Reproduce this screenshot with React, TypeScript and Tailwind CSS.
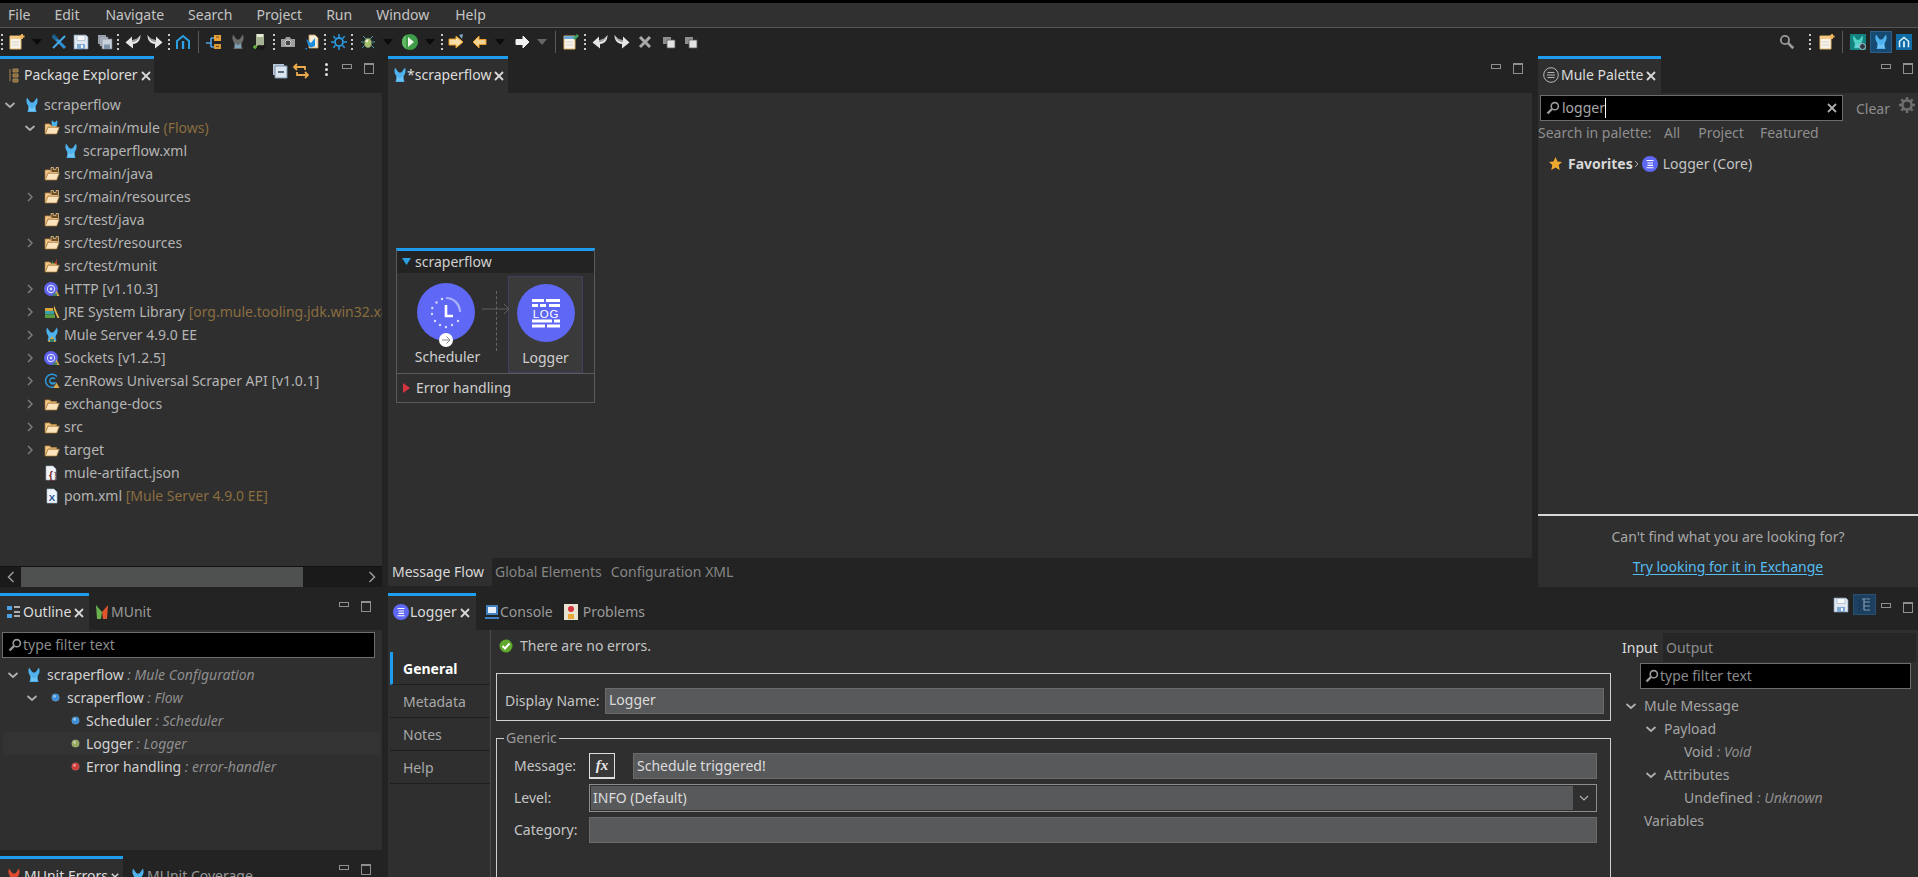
import React from "react";

type P = { className?: string };

const S = ({ w = 16, h = 16, vb, className, children }: { w?: number; h?: number; vb?: string; className?: string; children: React.ReactNode }) => (
  <svg width={w} height={h} viewBox={vb ?? `0 0 ${w} ${h}`} className={"shrink-0 " + (className ?? "")}>{children}</svg>
);

const Mule = ({ className, color = "#4db2ee", w = 16, h = 16 }: P & { color?: string; w?: number; h?: number }) => (
  <S w={w} h={h} vb="0 0 16 16" className={className}>
    <path d="M3 .5 L6.200 5 Q8 6 9.800 5 L13 .5 Q14.500 5 12 8.500 Q11 10 12.500 15 H3.500 Q5 10 4 8.500 Q1.500 5 3 .5Z" fill={color} />
    <path d="M5.200 9 L8 11.500 L10.800 9 L11 14 H5Z" fill="#8ad2f8" opacity=".55" />
  </S>
);

const Folder = ({ className, badge }: P & { badge?: "mule" | "munit" | "pkg" }) => (
  <S className={className}>
    <path d="M1.500 3.500 H6 L7.500 5 H12.500 V8 H1.500Z" fill="#7d5a2c" />
    <path d="M1 4 H5.500 L7 5.500 H12.500 V7 H4 L1.500 14 H1Z" fill="#f2c68c" stroke="#a87a3a" strokeWidth=".6" />
    <path d="M4 7.200 H15.300 L12.700 14 H1.300Z" fill="#fbe3bd" stroke="#b07d3b" strokeWidth=".7" />
    {badge === "pkg" && <path d="M7 1.500 h2.500 v2 h2.500 v-2 h2.500 v5 h-7.500Z" fill="#6f4e22" stroke="#f4d29f" strokeWidth=".7" />}
    {badge === "mule" && <path d="M8 .3 L10.500 2.600 L13 .3 C13.800 2.500 13.500 4.500 12.500 6 H8.500 C7.500 4.500 7.200 2.500 8 .3Z" fill="#45b1ee" />}
    {badge === "munit" && <>
      <path d="M8 2 L10 6 H8.500Z" fill="#4aa83e" />
      <path d="M13 .5 L10.500 6 H12.500Z" fill="#d9442a" />
    </>}
  </S>
);

const Lib = ({ className }: P) => (
  <S className={className}>
    <circle cx="7" cy="8" r="7" fill="#5f63ee" />
    <circle cx="7" cy="8" r="3.600" fill="none" stroke="#d8dcff" strokeWidth="1.100" />
    <circle cx="7" cy="8" r="1.400" fill="#d8dcff" />
    <path d="M10 15 L12.500 9.500 L15.500 15Z" fill="#d7a94a" />
    <path d="M9 12.500 H13 V15 H9Z" fill="#3f7f66" />
  </S>
);

const Jre = ({ className }: P) => (
  <S className={className}>
    <path d="M1 4 H9 V7 H1Z" fill="#d8a53c" />
    <path d="M1 7 H10 V10.500 H1Z" fill="#3aa0a8" />
    <path d="M1 10.500 H11 V14 H1Z" fill="#5a9c3f" />
    <path d="M10 1.500 L15.500 14 H13.500 L9.800 5.500Z" fill="#e4b64f" />
  </S>
);

const MuleLib = ({ className }: P) => (
  <S className={className}>
    <path d="M3 .5 L6.200 5 Q8 6 9.800 5 L13 .5 Q14.500 5 12 8.500 Q11 10 12.500 14 H3.500 Q5 10 4 8.500 Q1.500 5 3 .5Z" fill="#4db2ee" />
    <path d="M4 15 L8 9 L12 15Z" fill="#d7a94a" />
    <path d="M6 12 H10 V15 H6Z" fill="#3f7f66" />
  </S>
);

const Zen = ({ className }: P) => (
  <S className={className}>
    <path d="M13 3.500 A6.500 6.500 0 1 0 13 12" fill="none" stroke="#2e9bd8" strokeWidth="1.500" />
    <path d="M11 6 A3 3 0 1 0 11 10 H6.500" fill="none" stroke="#2e9bd8" strokeWidth="1.300" />
    <path d="M9.500 15 L12.500 9.500 L15.500 15Z" fill="#d7a94a" />
  </S>
);

const JsonFile = ({ className }: P) => (
  <S className={className}>
    <path d="M2 1 H9 L12 4 V15 H2Z" fill="#f0f3f7" stroke="#9cb0c4" strokeWidth=".6" />
    <text x="5" y="14" fontSize="10" fontFamily="Liberation Sans" fontWeight="700" fill="#7b1f1f">{"{"}</text>
    <text x="10" y="14" fontSize="9" fontFamily="Liberation Sans" fill="#5a2828">{"}"}</text>
  </S>
);

const PomFile = ({ className }: P) => (
  <S className={className}>
    <path d="M3 1 H10 L13 4 V15 H3Z" fill="#eef4fa" stroke="#a8bfd3" strokeWidth=".6" />
    <text x="4.800" y="12.500" fontSize="9.500" fontFamily="Liberation Sans" fontWeight="700" fill="#1d4f8f">X</text>
  </S>
);

const Chev = ({ open, className }: P & { open?: boolean }) => (
  <S w={16} h={16} className={className}>
    {open ? <path d="M3.500 6 L8 10 L12.500 6" fill="none" stroke="#b0b0b0" strokeWidth="1.700" /> : <path d="M6 4 L10 8 L6 12" fill="none" stroke="#7b7b7b" strokeWidth="1.500" />}
  </S>
);

const Close = ({ className, s = 10 }: P & { s?: number }) => (
  <S w={s} h={s} vb="0 0 10 10" className={className}>
    <path d="M1 1 L9 9 M9 1 L1 9" stroke="#d8d8d8" strokeWidth="1.800" />
  </S>
);

const MinMax = ({ className }: P) => (
  <div className={"flex items-center gap-[12px] " + (className ?? "")}>
    <div className="w-[10px] h-[5px] border border-[#8f8f8f] -mt-[5px]" />
    <div className="w-[10px] h-[11px] border border-[#8f8f8f] border-t-2" />
  </div>
);

const Dots = ({ className }: P) => (
  <div className={"w-[3px] h-[16px] flex flex-col justify-between shrink-0 " + (className ?? "")}>
    <span className="w-[2px] h-[2px] bg-[#c8c8c8]" /><span className="w-[2px] h-[2px] bg-[#c8c8c8]" /><span className="w-[2px] h-[2px] bg-[#c8c8c8]" /><span className="w-[2px] h-[2px] bg-[#c8c8c8]" />
  </div>
);

const Sep = ({ className }: P) => <div className={"w-px h-[22px] bg-[#5a5a5a] shrink-0 " + (className ?? "")} />;
const Drop = ({ className, gray }: P & { gray?: boolean }) => (
  <S w={10} h={6} className={className}><path d="M0 0 H10 L5 6Z" fill={gray ? "#666" : "#0b0b0b"} /></S>
);

const NewFile = ({ className, pin }: P & { pin?: boolean }) => (
  <S w={18} h={18} className={className}>
    <path d="M2 3 H13 V16 H2Z" fill="#f8f3e6" stroke="#e0b66f" strokeWidth="1" />
    <path d="M2 3 H13 V6 H2Z" fill={pin ? "#6fa6d8" : "#f3c884"} />
    <path d="M4 9 H11 M4 12 H11" stroke="#d4d4d4" strokeWidth="1" />
    {pin ? <path d="M11 5 L15 1 L17 3 L13 7Z" fill="#3fa05a" /> : <path d="M14 1 V6 M11.500 3.500 H16.500" stroke="#f5b85c" strokeWidth="1.800" />}
  </S>
);

const CrossBlue = ({ className }: P) => (
  <S className={className}>
    <path d="M2 2 L14 14" stroke="#2d8fd0" strokeWidth="3" />
    <path d="M14 2 L2 14" stroke="#49a8e6" strokeWidth="2" />
    <path d="M2 1 L6 5" stroke="#1c5c8a" strokeWidth="3" />
  </S>
);

const Save = ({ className }: P) => (
  <S className={className}>
    <path d="M1 1 H13 L15 3 V15 H1Z" fill="#dfe8f3" stroke="#7d93ac" strokeWidth=".7" />
    <path d="M4 1.500 H12 V6.500 H4Z" fill="#f4f6f9" stroke="#9aa9ba" strokeWidth=".6" />
    <path d="M4 10 H12 V15 H4Z" fill="#7fa8cf" />
    <path d="M8 11 H10 V14 H8Z" fill="#eef3f8" />
  </S>
);

const SaveAll = ({ className }: P) => (
  <S className={className}>
    <path d="M1 1 H9 V10 H1Z" fill="#9aa3ad" />
    <path d="M3 3 H11 V12 H3Z" fill="#b6bec7" stroke="#717b86" strokeWidth=".5" />
    <path d="M5 5 H15 V15 H5Z" fill="#c9d1da" stroke="#717b86" strokeWidth=".6" />
    <path d="M7 10.500 H13 V15 H7Z" fill="#7e93a8" />
  </S>
);

const Undo = ({ className, flip }: P & { flip?: boolean }) => (
  <S className={className}>
    <g transform={flip ? "translate(16,0) scale(-1,1)" : undefined}>
      <path d="M15.500 1 C15.500 7 12.500 9.500 8 10 V14.500 L.5 8.500 L7 2.500 V6 C10.500 6 13.500 4 15.500 1Z" fill="#e6e6e6" />
      <path d="M15.500 1 C13.500 4 10.500 6 7 6 V8 C11 8 14 5.500 15.500 1Z" fill="#9c9c9c" />
    </g>
  </S>
);

const Arch = ({ className, color = "#2d9fe3" }: P & { color?: string }) => (
  <S className={className}>
    <path d="M2 15 V7 L8 2 L14 7 V15" fill="none" stroke={color} strokeWidth="2" />
    <path d="M8 7 V15" stroke={color} strokeWidth="2.400" />
  </S>
);

const TreeTb = ({ className }: P) => (
  <S className={className}>
    <path d="M0 9 H6 M5 4 V13 M5 4 H8 M5 13 H8" stroke="#4da3e6" strokeWidth="1.600" fill="none" />
    <path d="M8 1 H15 V7 H8Z" fill="#e8a238" />
    <path d="M8 10 H15 V15 H8Z" fill="#d89a3a" />
    <path d="M10 3 H13 M10 12.500 H13" stroke="#7a4a10" strokeWidth="1" />
  </S>
);

const Jar = ({ className }: P) => (
  <S w={14} h={18} className={className}>
    <path d="M3 1 H11 V13 H3Z" fill="#a7b193" />
    <path d="M4 1 H10 V4 H4Z" fill="#e5e9d4" />
    <path d="M0 14 H4 M2 12 V16" stroke="#65b33e" strokeWidth="1.500" />
    <text x="4" y="17" fontSize="9" fontFamily="Liberation Sans" fontStyle="italic" fontWeight="700" fill="#111">m</text>
  </S>
);

const Camera = ({ className }: P) => (
  <S className={className}>
    <path d="M1 5 H5 L6 3 H10 L11 5 H15 V13 H1Z" fill="#9d9d9d" />
    <circle cx="8" cy="9" r="3" fill="#444" stroke="#d4d4d4" strokeWidth="1" />
  </S>
);

const BlueFile = ({ className }: P) => (
  <S className={className}>
    <path d="M5 1 H11 L14 4 V14 H5Z" fill="#f6ecd8" stroke="#c8a165" strokeWidth=".8" />
    <path d="M2 5 L7 9 L11 4 V12 L7 13.500 L4.500 12Z" fill="#1a8ddb" />
    <path d="M1 14 H3 V16Z" fill="#1a8ddb" />
  </S>
);

const Sun = ({ className }: P) => (
  <S className={className}>
    <circle cx="8" cy="8" r="4" fill="none" stroke="#2c9ae0" strokeWidth="1.800" />
    <path d="M8 0 V3 M8 13 V16 M0 8 H3 M13 8 H16 M2.300 2.300 L4.400 4.400 M11.600 11.600 L13.700 13.700 M13.700 2.300 L11.600 4.400 M4.400 11.600 L2.300 13.700" stroke="#2c9ae0" strokeWidth="1.500" />
  </S>
);

const Bug = ({ className }: P) => (
  <S className={className}>
    <path d="M3 2 L6 5 M13 2 L10 5 M1 8 H4 M12 8 H15 M2 14 L5 11 M14 14 L11 11" stroke="#4aa0a0" strokeWidth="1" />
    <ellipse cx="8" cy="9" rx="3.800" ry="5" fill="#a6bf6a" stroke="#456" strokeWidth=".6" />
    <circle cx="7" cy="7" r="1.400" fill="#e8f0d0" />
  </S>
);

const Run = ({ className }: P) => (
  <S w={18} h={18} className={className}>
    <circle cx="9" cy="9" r="8" fill="#3e9b47" />
    <path d="M7 4 L13 9 L7 14Z" fill="#f2f7ec" />
    <path d="M1 9 A8 8 0 0 1 5 2 V16 A8 8 0 0 1 1 9Z" fill="#5fb964" />
  </S>
);

const ArrowFolder = ({ className }: P) => (
  <S className={className}>
    <path d="M1 5 H8 V2 L15 8 L8 14 V11 H1Z" fill="#f7dfa8" stroke="#e59a22" strokeWidth="1" />
    <path d="M11 1 L15 0 L14 5Z" fill="#82a8c8" />
  </S>
);

const Arrow = ({ className, flip, color = "#f5d390", stroke = "#e89a2a" }: P & { flip?: boolean; color?: string; stroke?: string }) => (
  <S className={className}>
    <g transform={flip ? "translate(16,0) scale(-1,1)" : undefined}>
      <path d="M2 5.500 H9 V2 L15 8 L9 14 V10.500 H2Z" fill={color} stroke={stroke} strokeWidth="1" />
    </g>
  </S>
);

const TabSet = ({ className }: P) => (
  <S w={14} h={14} className={className}>
    <path d="M1 2 H9 V9 H1Z" fill="#8f8f8f" />
    <path d="M5 5 H13 V13 H5Z" fill="#e3e3e3" stroke="#555" strokeWidth=".8" />
  </S>
);

const Glass = ({ className, s = 14 }: P & { s?: number }) => (
  <S w={s} h={s} vb="0 0 14 14" className={className}>
    <circle cx="8.800" cy="5.200" r="3.600" fill="none" stroke="#9a9a9a" strokeWidth="1.600" />
    <path d="M6 8 L1.500 12.500" stroke="#9a9a9a" strokeWidth="2.400" />
  </S>
);

const Dot = ({ color, className }: P & { color: string }) => (
  <S w={9} h={9} className={className}>
    <circle cx="4.500" cy="4.500" r="3.800" fill={color} stroke="#ffffff30" strokeWidth=".8" />
    <circle cx="3.600" cy="3.400" r="1.300" fill="#ffffff80" />
  </S>
);

const LoggerDot = ({ className, s = 16 }: P & { s?: number }) => (
  <S w={s} h={s} vb="0 0 16 16" className={className}>
    <circle cx="8" cy="8" r="8" fill="#5e68f4" />
    <path d="M4.500 4.500 H11.500 M5.500 7 H11 M5.500 9.400 H11 M4.500 11.800 H11.500" stroke="#fff" strokeWidth="1.100" />
  </S>
);

const Gear = ({ className }: P) => (
  <S className={className}>
    <circle cx="8" cy="8" r="4.600" fill="none" stroke="#6e6e6e" strokeWidth="2.600" />
    <path d="M8 0 V3 M8 13 V16 M0 8 H3 M13 8 H16 M2.300 2.300 L4.400 4.400 M11.600 11.600 L13.700 13.700 M13.700 2.300 L11.600 4.400 M4.400 11.600 L2.300 13.700" stroke="#6e6e6e" strokeWidth="2.400" />
  </S>
);

const Row = ({ indent, chev, icon, children, row }: { indent: string; chev?: "o" | "c"; icon: React.ReactNode; children: React.ReactNode; row?: string }) => (
  <div className={"h-[23px] flex items-center whitespace-nowrap " + indent + " " + (row ?? "")}>
    <div className="w-4 h-4 shrink-0">{chev && <Chev open={chev === "o"} />}</div>
    <div className="ml-[6px] w-4 flex justify-center shrink-0">{icon}</div>
    <span className="ml-1">{children}</span>
  </div>
);

const Dec = ({ children }: { children: React.ReactNode }) => <span className="text-[#8a6d3f]">{children}</span>;
const It = ({ children }: { children: React.ReactNode }) => <span className="italic text-[#8e8e8e]">{children}</span>;

const ActiveTab = ({ w, children }: { w: string; children: React.ReactNode }) => (
  <div className={"h-[37px] bg-[#2f2f2f] border-t-[3px] border-[#1e9cf0] flex items-center text-[#dcdcdc] shrink-0 pb-[2px] " + w}>{children}</div>
);

const FilterInput = ({ className, children }: P & { children: React.ReactNode }) => (
  <div className={"bg-black border border-[#6d6d6d] flex items-center " + (className ?? "")}>{children}</div>
);

const SideTab = ({ children, active }: { children: React.ReactNode; active?: boolean }) => (
  <div className={"h-[33px] flex items-center border-b border-[#1f1f1f] pt-[2px] " + (active ? "border-l-[3px] border-l-[#1e9cf0] pl-[10px] font-bold text-white" : "pl-[13px] text-[#a8a8a8]")}>{children}</div>
);

const Field = ({ className, children }: P & { children?: React.ReactNode }) => (
  <div className={"bg-[#58595b] border border-[#6a6a6a] h-[26px] flex items-center text-[#dcdcdc] pl-[2px] " + (className ?? "")}>{children}</div>
);

const Clock = () => (
  <svg width="58" height="58" viewBox="0 0 58 58">
    <circle cx="29" cy="29" r="29" fill="#5e68f4" />
    <path d="M29 15 A14 14 0 0 1 43 29" fill="none" stroke="#aab1fb" strokeWidth="2.200" />
    <path d="M29 22 V33 H36" fill="none" stroke="#fff" strokeWidth="2.600" />
    <path d="M25 16 l0 .1 M19.500 19.500 l0 .1 M15.300 25 l0 .1 M15 31 l0 .1 M18 38 l0 .1 M23 42 l0 .1 M29 44 l0 .1 M35 42 l0 .1 M41 38 l0 .1" stroke="#d7daff" strokeWidth="2.400" strokeLinecap="round" />
  </svg>
);

const LogBadge = () => (
  <svg width="58" height="58" viewBox="0 0 58 58">
    <circle cx="29" cy="29" r="29" fill="#5e68f4" />
    <path d="M15 16.500 H27 M29 16.500 H43 M15 21.500 H21 M23 21.500 H29 M32 21.500 H43 M15 37 H35 M37 37 H43 M15 42 H28 M30 42 H43" stroke="#fff" strokeWidth="3" />
    <text x="29" y="34" textAnchor="middle" fontSize="11.500" fontFamily="Liberation Sans" letterSpacing=".8" fill="#fff">LOG</text>
  </svg>
);

export default function App() {
  return (
    <div className="w-[1918px] h-[877px] overflow-hidden bg-[#232323] font-['Noto_Sans',sans-serif] text-[14px] text-[#b4b4b4] flex flex-col leading-none">
      <div className="h-[3px] bg-black shrink-0" />
      <div className="h-[25px] bg-[#303030] border-b border-[#565656] flex items-center shrink-0 text-[#c4c4c4] pl-[8px]">
        <span>File</span><span className="ml-[24px]">Edit</span><span className="ml-[26px]">Navigate</span><span className="ml-[24px]">Search</span><span className="ml-[24px]">Project</span><span className="ml-[24px]">Run</span><span className="ml-[24px]">Window</span><span className="ml-[26px]">Help</span>
      </div>
      <div className="h-[28px] flex items-center shrink-0 pr-[6px]">
        <Dots className="ml-px" />
        <NewFile className="ml-1" />
        <Drop className="ml-[6px]" />
        <CrossBlue className="ml-[9px]" />
        <Save className="ml-[6px]" />
        <SaveAll className="ml-2" />
        <Dots className="ml-1" />
        <Undo className="ml-[5px]" />
        <Undo flip className="ml-[6px]" />
        <Dots className="ml-[5px]" />
        <Arch className="ml-1" />
        <Sep className="ml-[7px]" />
        <TreeTb className="ml-[7px]" />
        <Mule color="#6c6c6c" className="ml-2" />
        <Jar className="ml-[7px]" />
        <Dots className="ml-[6px]" />
        <Camera className="ml-1" />
        <BlueFile className="ml-2" />
        <Dots className="ml-1" />
        <Sun className="ml-1" />
        <Dots className="ml-1" />
        <Bug className="ml-[6px]" />
        <Drop className="ml-[7px]" />
        <Run className="ml-[8px]" />
        <Drop className="ml-[6px]" />
        <Dots className="ml-[6px]" />
        <ArrowFolder className="ml-1" />
        <Arrow flip className="ml-2" />
        <Drop className="ml-[7px]" />
        <Arrow color="#f0f0f0" stroke="#f0f0f0" className="ml-[9px]" />
        <Drop gray className="ml-[7px]" />
        <Sep className="ml-2" />
        <NewFile pin className="ml-[6px]" />
        <Dots className="ml-1" />
        <Undo className="ml-[5px]" />
        <Undo flip className="ml-[6px]" />
        <S w={14} h={14} className="ml-2"><path d="M2 2 L12 12 M12 2 L2 12" stroke="#a8a8a8" strokeWidth="3" /></S>
        <TabSet className="ml-[10px]" />
        <TabSet className="ml-2" />
        <Glass s={16} className="ml-auto -scale-x-100" />
        <Dots className="ml-[14px]" />
        <NewFile className="ml-[6px]" />
        <Sep className="ml-[6px]" />
        <div className="ml-[7px] w-[16px] h-[16px] bg-[#13827f] flex items-center justify-center relative">
          <Mule w={14} h={14} color="#4fd2c4" />
          <span className="absolute right-0 bottom-0 w-[7px] h-[7px] rounded-full bg-[#2a3a44] border border-[#b4c4cc]" />
        </div>
        <div className="ml-1 w-[22px] h-[22px] bg-[#164a72] border border-[#2f5f86] flex items-center justify-center"><Mule color="#4db2ee" /></div>
        <div className="ml-[4px] w-[16px] h-[16px] bg-[#0f6da8] flex items-center justify-center"><Arch color="#e4f2fb" className="scale-75" /></div>
      </div>

      <div className="flex-1 min-h-0 flex gap-[6px]">
        {/* left column */}
        <div className="w-[382px] shrink-0 flex flex-col gap-[6px]">
          <div className="h-[531px] shrink-0 flex flex-col">
            <div className="h-[37px] flex shrink-0">
              <ActiveTab w="w-[154px] pl-[8px]">
                <S w={12} h={16} className="mr-[4px]"><path d="M2 2 V14 M5 2 H10 V5 H5Z M5 7 H10 V10 H5Z M5 12 H10 V15 H5Z" stroke="#a58856" strokeWidth="1" fill="#8d6d3a" /></S>
                <span className="text-[14px]">Package Explorer</span>
                <Close className="ml-[3px] mt-[2px]" />
              </ActiveTab>
              <div className="flex-1 flex items-start pt-[5px] pl-[118px]">
                <S className="mt-[2px]"><path d="M1 1 H12 V12 H1Z" fill="#b8c7d8" /><path d="M3 3 H15 V15 H3Z" fill="#dbe6f1" stroke="#7d93ac" /><path d="M6 9 H12" stroke="#345" strokeWidth="1.500" /></S>
                <S className="ml-[5px] mt-[2px]"><path d="M4 1 L1 4 L4 7 M1 4 H12 V7" fill="none" stroke="#e9a94c" strokeWidth="1.800" /><path d="M12 9 L15 12 L12 15 M15 12 H4 V9" fill="none" stroke="#e9a94c" strokeWidth="1.800" /></S>
                <div className="ml-[16px] mt-[2px] flex flex-col gap-[2px]"><span className="w-[3px] h-[3px] rounded-full bg-[#e0e0e0]" /><span className="w-[3px] h-[3px] rounded-full bg-[#e0e0e0]" /><span className="w-[3px] h-[3px] rounded-full bg-[#e0e0e0]" /></div>
                <MinMax className="ml-[14px] mt-[2px]" />
              </div>
            </div>
            <div className="flex-1 bg-[#2f2f2f] flex flex-col min-h-0">
              <div className="flex-1 overflow-hidden">
                <Row indent="pl-[2px]" chev="o" icon={<Mule />}>scraperflow</Row>
                <Row indent="pl-[22px]" chev="o" icon={<Folder badge="mule" />}>src/main/mule <Dec>(Flows)</Dec></Row>
                <Row indent="pl-[41px]" icon={<Mule />}>scraperflow.xml</Row>
                <Row indent="pl-[22px]" icon={<Folder badge="pkg" />}>src/main/java</Row>
                <Row indent="pl-[22px]" chev="c" icon={<Folder badge="pkg" />}>src/main/resources</Row>
                <Row indent="pl-[22px]" icon={<Folder badge="pkg" />}>src/test/java</Row>
                <Row indent="pl-[22px]" chev="c" icon={<Folder badge="pkg" />}>src/test/resources</Row>
                <Row indent="pl-[22px]" icon={<Folder badge="munit" />}>src/test/munit</Row>
                <Row indent="pl-[22px]" chev="c" icon={<Lib />}>HTTP [v1.10.3]</Row>
                <Row indent="pl-[22px]" chev="c" icon={<Jre />}>JRE System Library <Dec>[org.mule.tooling.jdk.win32.x86_64]</Dec></Row>
                <Row indent="pl-[22px]" chev="c" icon={<MuleLib />}>Mule Server 4.9.0 EE</Row>
                <Row indent="pl-[22px]" chev="c" icon={<Lib />}>Sockets [v1.2.5]</Row>
                <Row indent="pl-[22px]" chev="c" icon={<Zen />}>ZenRows Universal Scraper API [v1.0.1]</Row>
                <Row indent="pl-[22px]" chev="c" icon={<Folder />}>exchange-docs</Row>
                <Row indent="pl-[22px]" chev="c" icon={<Folder />}>src</Row>
                <Row indent="pl-[22px]" chev="c" icon={<Folder />}>target</Row>
                <Row indent="pl-[22px]" icon={<JsonFile />}>mule-artifact.json</Row>
                <Row indent="pl-[22px]" icon={<PomFile />}>pom.xml <Dec>[Mule Server 4.9.0 EE]</Dec></Row>
              </div>
              <div className="h-[21px] bg-[#1a1a1a] border-t border-[#111] flex items-center shrink-0">
                <div className="w-[21px] flex justify-center"><S w={8} h={12}><path d="M6.500 1 L1.500 6 L6.500 11" fill="none" stroke="#9a9a9a" strokeWidth="1.500" /></S></div>
                <div className="w-[282px] h-full bg-[#4f5050]" />
                <div className="flex-1" />
                <div className="w-[21px] flex justify-center"><S w={8} h={12}><path d="M1.500 1 L6.500 6 L1.500 11" fill="none" stroke="#9a9a9a" strokeWidth="1.500" /></S></div>
              </div>
            </div>
          </div>
          <div className="h-[257px] shrink-0 flex flex-col">
            <div className="h-[37px] flex items-stretch shrink-0">
              <ActiveTab w="w-[89px] pl-[6px]">
                <S w={15} h={16} className="mr-[2px]"><path d="M1 2 H6 V6 H1Z M1 10 H6 V14 H1Z" fill="#4da3e6" /><path d="M8 3 H14 M8 8 H14 M8 12 H14" stroke="#d8d8d8" strokeWidth="1.500" /></S>
                <span>Outline</span>
                <Close className="ml-[3px] mt-[2px]" />
              </ActiveTab>
              <div className="flex items-center pl-[6px] text-[#9a9a9a]">
                <S w={14} h={16}><path d="M1 1 L7 8 L6 15 H2 Z" fill="#6ab04c" /><path d="M13 1 L7 8 L8 15 H12Z" fill="#e0552e" /></S>
                <span className="ml-[2px]">MUnit</span>
              </div>
              <div className="flex-1 flex items-start justify-end pt-[6px] pr-[11px]"><MinMax className="mt-[2px]" /></div>
            </div>
            <div className="flex-1 bg-[#2f2f2f] pt-[2px]">
              <FilterInput className="mx-[2px] w-[373px] h-[26px] pl-[5px] text-[#8a8a8a]"><Glass /><span className="ml-[1px]">type filter text</span></FilterInput>
              <div className="pt-[5px] text-[#d2d2d2]">
                <div className="h-[23px] flex items-center pl-[5px]"><Chev open /><Mule className="ml-[5px]" /><span className="ml-[5px]">scraperflow <It>: Mule Configuration</It></span></div>
                <div className="h-[23px] flex items-center pl-[24px]"><Chev open /><Dot color="#3a8fd8" className="ml-[11px]" /><span className="ml-[7px]">scraperflow <It>: Flow</It></span></div>
                <div className="h-[23px] flex items-center pl-[71px]"><Dot color="#3a8fd8" /><span className="ml-[6px]">Scheduler <It>: Scheduler</It></span></div>
                <div className="h-[23px] flex items-center pl-[68px] ml-[3px] mr-[2px] bg-[#333333]"><Dot color="#96a860" /><span className="ml-[6px]">Logger <It>: Logger</It></span></div>
                <div className="h-[23px] flex items-center pl-[71px]"><Dot color="#cf3a36" /><span className="ml-[6px]">Error handling <It>: error-handler</It></span></div>
              </div>
            </div>
          </div>
          <div className="flex-1 min-h-0 flex">
            <div className="h-[37px] w-[123px] bg-[#2f2f2f] border-t-[3px] border-[#1e9cf0] flex items-center pl-[6px] text-[#dcdcdc] shrink-0">
              <Mule color="#e04a30" className="mr-[2px]" /><span>MUnit Errors</span><Close s={8} className="ml-[3px] mt-[2px]" />
            </div>
            <div className="flex h-[37px] items-center pl-[7px] pt-[3px] text-[#9a9a9a]"><Mule /><span className="ml-[1px]">MUnit Coverage</span></div>
            <div className="flex-1 flex justify-end pr-[11px] pt-[6px]"><MinMax className="mt-[2px] self-start" /></div>
          </div>
        </div>

        {/* right column */}
        <div className="flex-1 min-w-0 flex flex-col gap-[6px]">
          <div className="h-[531px] shrink-0 flex gap-[6px]">
            <div className="w-[1144px] shrink-0 flex flex-col">
              <div className="h-[37px] flex shrink-0">
                <ActiveTab w="w-[120px] pl-[4px]">
                  <Mule />
                  <span className="-ml-px">*scraperflow</span>
                  <Close className="ml-[3px] mt-[2px]" />
                </ActiveTab>
                <div className="flex-1 flex justify-end pr-[9px] pt-[7px]"><MinMax className="self-start" /></div>
              </div>
              <div className="flex-1 bg-[#2f2f2f] flex flex-col min-h-0">
                <div className="flex-1 min-h-0 pt-[155px] pl-[8px]">
                  <div className="w-[199px] border border-[#5a5a5a] border-t-[3px] border-t-[#1e9cf0]">
                    <div className="h-[22px] bg-[#232323] flex items-center pl-[5px] text-[#cfcfcf]">
                      <S w={9} h={8}><path d="M0 0 H9 L4.500 7Z" fill="#2d9fe3" /></S>
                      <span className="ml-[4px]">scraperflow</span>
                    </div>
                    <div className="h-[101px] flex pt-[3px] border-b border-[#5a5a5a] relative text-[#cfcfcf]">
                      <div className="w-[99px] pl-[6px] flex flex-col items-center pt-[7px] shrink-0">
                        <div className="relative w-[58px] h-[58px] mr-[8px]">
                          <Clock />
                          <div className="absolute left-[22px] top-[50px] w-[14px] h-[14px] rounded-full bg-white flex items-center justify-center">
                            <S w={10} h={10}><path d="M1 5 H9 M5.500 1.500 L9 5 L5.500 8.500" fill="none" stroke="#8a8a8a" strokeWidth="1" /></S>
                          </div>
                        </div>
                        <span className="mt-[9px] mr-[4px]">Scheduler</span>
                      </div>
                      <div className="absolute left-[99px] top-[18px] h-[60px] border-l border-dashed border-[#666]" />
                      <svg className="absolute left-[85px] top-[30px]" width="28" height="12"><path d="M0 6 H27 M22 1 L27 6 L22 11" fill="none" stroke="#5f5f5f" strokeWidth="1" /></svg>
                      <div className="w-[75px] h-[97px] ml-[12px] bg-[#3a3a3a] border border-[#3f3f5f] flex flex-col items-center pt-[7px]">
                        <LogBadge />
                        <span className="mt-[9px]">Logger</span>
                      </div>
                    </div>
                    <div className="h-[28px] flex items-center pl-[6px] text-[#cfcfcf]">
                      <S w={7} h={10}><path d="M0 0 L7 5 L0 10Z" fill="#d8343f" /></S>
                      <span className="ml-[6px]">Error handling</span>
                    </div>
                  </div>
                </div>
                <div className="h-[28px] flex shrink-0">
                  <div className="w-[104px] pl-[4px] flex items-center text-[#d8d8d8]">Message Flow</div>
                  <div className="flex-1 bg-[#232323] flex items-center pl-[3px] text-[#868686]"><span>Global Elements</span><span className="ml-[9px]">Configuration XML</span></div>
                </div>
                <div className="h-px bg-[#232323] shrink-0" />
              </div>
            </div>
            <div className="flex-1 min-w-0 flex flex-col">
              <div className="h-[37px] flex shrink-0">
                <ActiveTab w="w-[123px] pl-[5px]">
                  <S><circle cx="8" cy="8" r="7.300" fill="none" stroke="#b5b5b5" strokeWidth="1" /><path d="M4.500 5.500 H11.500 M4 8 H12 M4.500 10.500 H11.500" stroke="#b5b5b5" strokeWidth="1" /></S>
                  <span className="ml-[2px]">Mule Palette</span>
                  <Close className="ml-[3px] mt-[2px]" />
                </ActiveTab>
                <div className="flex-1 flex justify-end pr-[5px] pt-[7px]"><MinMax className="self-start" /></div>
              </div>
              <div className="flex-1 bg-[#2f2f2f] flex flex-col min-h-0">
                <div className="flex items-start pt-[2px] pl-[2px] h-[28px] shrink-0">
                  <FilterInput className="w-[303px] h-[26px] pl-[5px] text-[#a8a8a8] relative">
                    <Glass />
                    <span className="ml-[2px]">logger</span>
                    <span className="w-px h-[20px] bg-white" />
                    <Close s={10} className="absolute right-[5px] top-[7px] opacity-80" />
                  </FilterInput>
                  <span className="ml-[13px] mt-[7px] text-[#8e8e8e]">Clear</span>
                  <Gear className="ml-[9px] mt-[2px]" />
                </div>
                <div className="h-[24px] flex items-center text-[#8e8e8e] shrink-0">
                  <span className="w-[126px] whitespace-nowrap">Search in palette:</span>
                  <span>All</span><span className="ml-[18px]">Project</span><span className="ml-[16px]">Featured</span>
                </div>
                <div className="h-[31px] flex items-center shrink-0 pl-[11px] pt-[6px]">
                  <S w={13} h={13}><path d="M6.500 0 L8.500 4.500 L13 5 L9.700 8 L10.700 13 L6.500 10.400 L2.300 13 L3.300 8 L0 5 L4.500 4.500Z" fill="#f0a930" /></S>
                  <span className="ml-[6px] font-bold text-[#d8d8d8]">Favorites</span>
                  <S w={6} h={8} className="ml-px"><path d="M1 1 L4 4 L1 7" fill="none" stroke="#aaa" strokeWidth="1" /></S>
                  <LoggerDot className="ml-[2px]" />
                  <span className="ml-[5px] text-[#c4c4c4]">Logger (Core)</span>
                </div>
                <div className="flex-1" />
                <div className="h-[2px] bg-[#d8d8d8] shrink-0" />
                <div className="h-[71px] flex flex-col items-center shrink-0 pt-[14px] text-[#a8a8a8]">
                  <span>Can't find what you are looking for?</span>
                  <span className="mt-[16px] text-[#55bdf0] underline underline-offset-2">Try looking for it in Exchange</span>
                </div>
              </div>
            </div>
          </div>

          <div className="flex-1 min-h-0 flex flex-col">
            <div className="h-[37px] flex shrink-0">
              <ActiveTab w="w-[88px] pl-[5px]">
                <LoggerDot />
                <span className="ml-px">Logger</span>
                <Close className="ml-[3px] mt-[2px]" />
              </ActiveTab>
              <div className="flex items-center pl-[8px] text-[#9a9a9a]">
                <S><path d="M2 1 H14 V11 H2Z" fill="#3f80c0" /><path d="M4 3 H12 V9 H4Z" fill="#e6eef7" /><path d="M1 13 H15 V15 H1Z" fill="#3f80c0" /></S>
                <span>Console</span>
                <S className="ml-[10px]"><path d="M1 0 H15 V16 H1Z" fill="#e8e2d0" /><circle cx="8" cy="5" r="3" fill="#d8343f" /><path d="M5 10 H11 V15 H5Z" fill="#e9a838" /></S>
                <span className="ml-[4px]">Problems</span>
              </div>
              <div className="flex-1 flex justify-end items-start pr-[5px] pt-[1px]">
                <Save className="mt-[3px] mr-[4px]" />
                <div className="w-[23px] h-[21px] bg-[#1d3f60] border border-[#2a5070] flex items-center justify-center mr-[5px]">
                  <S w={14} h={14}><path d="M4 1 H12 M6 1 V12 M6 4 H12 M6 8 H12 M6 12 H12" fill="none" stroke="#7f97ab" strokeWidth="1.200" /><path d="M1 3 h1 M1 7 h1 M1 11 h1 M3 5 h1 M3 9 h1 M8 2 h1 M8 6 h1 M8 10 h1" stroke="#0f2334" strokeWidth="1" /></S>
                </div>
                <MinMax className="mt-[8px]" />
              </div>
            </div>
            <div className="flex-1 min-h-0 bg-[#2f2f2f] flex overflow-hidden">
              <div className="w-[103px] shrink-0 border-r border-[#4a4a4a] pt-[22px] pl-[2px]">
                <SideTab active>General</SideTab>
                <SideTab>Metadata</SideTab>
                <SideTab>Notes</SideTab>
                <SideTab>Help</SideTab>
              </div>
              <div className="w-[1120px] shrink-0 pl-[5px] pt-[6px]">
                <div className="h-[19px] flex items-center pl-[3px]">
                  <S w={14} h={14}><circle cx="7" cy="7" r="6.500" fill="#5ea82c" /><path d="M3.500 7 L6 9.500 L10.500 4.500" fill="none" stroke="#fff" strokeWidth="2" /></S>
                  <span className="ml-[7px] text-[#c4c4c4]">There are no errors.</span>
                </div>
                <div className="h-[48px] mt-[18px] border border-[#cfcfcf] flex items-center pl-[8px] pr-[6px] pt-[8px]">
                  <span className="w-[100px] shrink-0 whitespace-nowrap text-[#c4c4c4]">Display Name:</span>
                  <Field className="flex-1"><span className="pl-px -mt-[3px]">Logger</span></Field>
                </div>
                <div className="relative h-[160px] mt-[17px] border border-[#cfcfcf] pl-[17px] pr-[13px] pt-[14px]">
                  <span className="absolute left-[7px] -top-[8px] bg-[#2f2f2f] px-[2px] text-[#9a9a9a]">Generic</span>
                  <div className="flex items-center h-[26px]">
                    <span className="w-[75px] text-[#c4c4c4]">Message:</span>
                    <div className="w-[26px] h-[26px] bg-[#383838] border border-[#dedede] border-b-2 flex items-center justify-center font-['Liberation_Serif',serif] italic font-bold text-[#e8e8e8] text-[15px]">fx</div>
                    <Field className="ml-[18px] flex-1"><span className="pl-[1px]">Schedule triggered!</span></Field>
                  </div>
                  <div className="flex items-center h-[28px] mt-[5px]">
                    <span className="w-[75px] text-[#c4c4c4]">Level:</span>
                    <div className="flex-1 h-[28px] border border-[#8d8d8d] flex items-center p-px">
                      <div className="flex-1 h-full bg-[#58595b] flex items-center pl-[2px] text-[#dcdcdc]">INFO (Default)</div>
                      <div className="w-[22px] flex justify-center"><S w={10} h={6}><path d="M1 1 L5 5 L9 1" fill="none" stroke="#b0b0b0" strokeWidth="1.200" /></S></div>
                    </div>
                  </div>
                  <div className="flex items-center h-[26px] mt-[5px]">
                    <span className="w-[75px] text-[#c4c4c4]">Category:</span>
                    <Field className="flex-1" />
                  </div>
                </div>
              </div>
              <div className="flex-1 min-w-0 pt-[3px] text-[#a4a4a4]">
                <div className="h-[29px] flex">
                  <div className="w-[52px] pl-[11px] flex items-center text-[#dcdcdc] shrink-0">Input</div>
                  <div className="flex-1 mr-[2px] bg-[#262626] flex items-center pl-[3px] text-[#8e8e8e]">Output</div>
                </div>
                <div className="pl-[29px] pr-[7px] mt-px">
                  <FilterInput className="h-[26px] pl-[4px] text-[#8a8a8a]"><Glass /><span className="ml-[1px]">type filter text</span></FilterInput>
                </div>
                <div className="mt-[5px]">
                  <div className="h-[23px] flex items-center pl-[12px]"><Chev open /><span className="ml-[5px]">Mule Message</span></div>
                  <div className="h-[23px] flex items-center pl-[32px]"><Chev open /><span className="ml-[5px]">Payload</span></div>
                  <div className="h-[23px] flex items-center pl-[73px]">Void <span className="ml-1"><It>: Void</It></span></div>
                  <div className="h-[23px] flex items-center pl-[32px]"><Chev open /><span className="ml-[5px]">Attributes</span></div>
                  <div className="h-[23px] flex items-center pl-[73px]">Undefined <span className="ml-1"><It>: Unknown</It></span></div>
                  <div className="h-[23px] flex items-center pl-[33px]">Variables</div>
                </div>
              </div>
            </div>
          </div>
        </div>
      </div>
    </div>
  );
}
